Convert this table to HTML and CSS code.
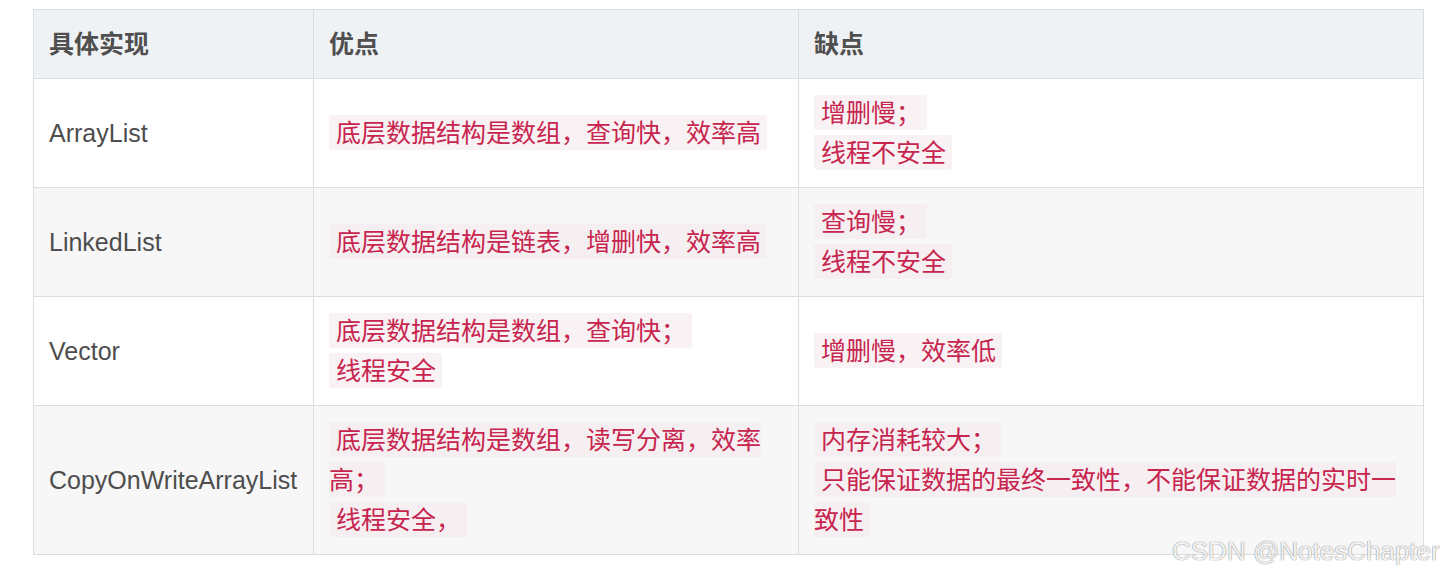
FILE: index.html
```html
<!DOCTYPE html>
<html lang="zh-CN">
<head>
<meta charset="utf-8">
<title>List 实现对比</title>
<link rel="stylesheet" href="styles.css">
</head>
<body>
<div class="page">
  <table class="cmp">
    <colgroup>
      <col class="c1">
      <col class="c2">
      <col class="c3">
    </colgroup>
    <thead>
      <tr><th>具体实现</th><th>优点</th><th>缺点</th></tr>
    </thead>
    <tbody>
      <tr>
        <td>ArrayList</td>
        <td><code>底层数据结构是数组，查询快，效率高</code></td>
        <td><code>增删慢；</code><br><code>线程不安全</code></td>
      </tr>
      <tr class="alt">
        <td>LinkedList</td>
        <td><code>底层数据结构是链表，增删快，效率高</code></td>
        <td><code>查询慢；</code><br><code>线程不安全</code></td>
      </tr>
      <tr>
        <td>Vector</td>
        <td><code>底层数据结构是数组，查询快；</code><br><code>线程安全</code></td>
        <td><code>增删慢，效率低</code></td>
      </tr>
      <tr class="alt">
        <td>CopyOnWriteArrayList</td>
        <td><code>底层数据结构是数组，读写分离，效率高；</code><br><code>线程安全，</code></td>
        <td><code>内存消耗较大；</code><br><code>只能保证数据的最终一致性，不能保证数据的实时一致性</code></td>
      </tr>
    </tbody>
  </table>
  <div class="watermark">CSDN @NotesChapter</div>
</div>
</body>
</html>
```

FILE: styles.css
```css
html, body {
  margin: 0;
  padding: 0;
  background: #ffffff;
}

.page {
  position: relative;
  padding: 9px 0 0 33px;
  height: 573px;
  font-family: "Liberation Sans", "Noto Sans CJK SC", sans-serif;
}

.cmp {
  border-collapse: collapse;
  table-layout: fixed;
  width: 1390px;
  font-size: 25px;
  line-height: 40px;
  color: #4d4d4d;
}

.c1 { width: 280px; }
.c2 { width: 485px; }
.c3 { width: 625px; }

.cmp th,
.cmp td {
  border: 1px solid #dddddd;
  padding: 14px 16px 14px 15px;
  text-align: left;
  vertical-align: middle;
}

.cmp th {
  background: #eff2f5;
  font-weight: bold;
  color: #4f4f4f;
}

.cmp tr.alt td {
  background: #f7f7f7;
}

.cmp code {
  font-family: "Liberation Sans", "Noto Sans CJK SC", sans-serif;
  font-size: 25px;
  color: #c7254e;
  background: #f9f2f4;
  padding: 4px 6px 3px 7px;
  border-radius: 3px;
}

.cmp tr.alt code {
  background: #f6eff2;
}

.watermark {
  position: absolute;
  left: 1172px;
  top: 536px;
  font-family: "Liberation Sans", sans-serif;
  font-size: 26px;
  line-height: 30px;
  color: #f2f2f2;
  text-shadow: 0 0 1px #8f8f8f, 0 0 1px #8f8f8f;
  white-space: nowrap;
}
```
